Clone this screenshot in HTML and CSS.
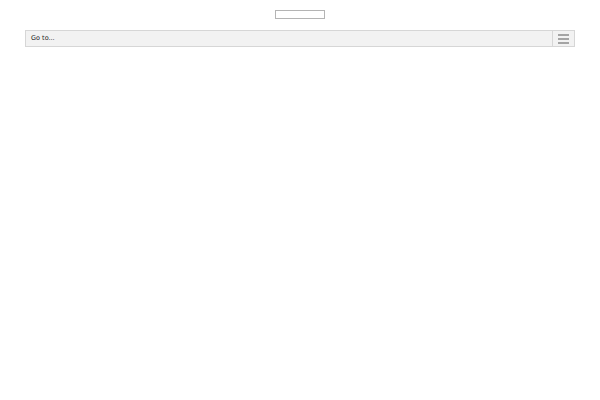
FILE: index.html
```html
<!DOCTYPE html>
<html>
<head>
<meta charset="utf-8">
<link rel="stylesheet" href="styles.css">
</head>
<body>
<div class="page">
  <div class="top"><div class="topbox"></div></div>
  <div class="nav">
    <div class="goto">Go to...</div>
    <div class="menu">
      <svg width="11" height="10" viewBox="0 0 11 10"><rect x="0" y="0" width="11" height="2" fill="#a4a4a4"/><rect x="0" y="4" width="11" height="2" fill="#a4a4a4"/><rect x="0" y="8" width="11" height="2" fill="#a4a4a4"/></svg>
    </div>
  </div>
</div>
</body>
</html>
```
FILE: styles.css
```css
html, body { margin: 0; padding: 0; background: #fff; }
.page { padding: 10px 25px 0; font-family: "DejaVu Sans", Verdana, sans-serif; }
.top { display: flex; justify-content: center; height: 20px; }
.topbox { width: 48px; height: 7px; border: 1px solid #b4b4b4; background: #fff; }
.nav { display: flex; height: 15px; border: 1px solid #d6d6d6; background: #f2f2f2; }
.goto { flex: 1; font-size: 6.5px; color: #222; line-height: 15px; padding-left: 5px; }
.menu { width: 21px; border-left: 1px solid #d6d6d6; display: flex; align-items: center; justify-content: center; }
.menu svg { display: block; }
```
